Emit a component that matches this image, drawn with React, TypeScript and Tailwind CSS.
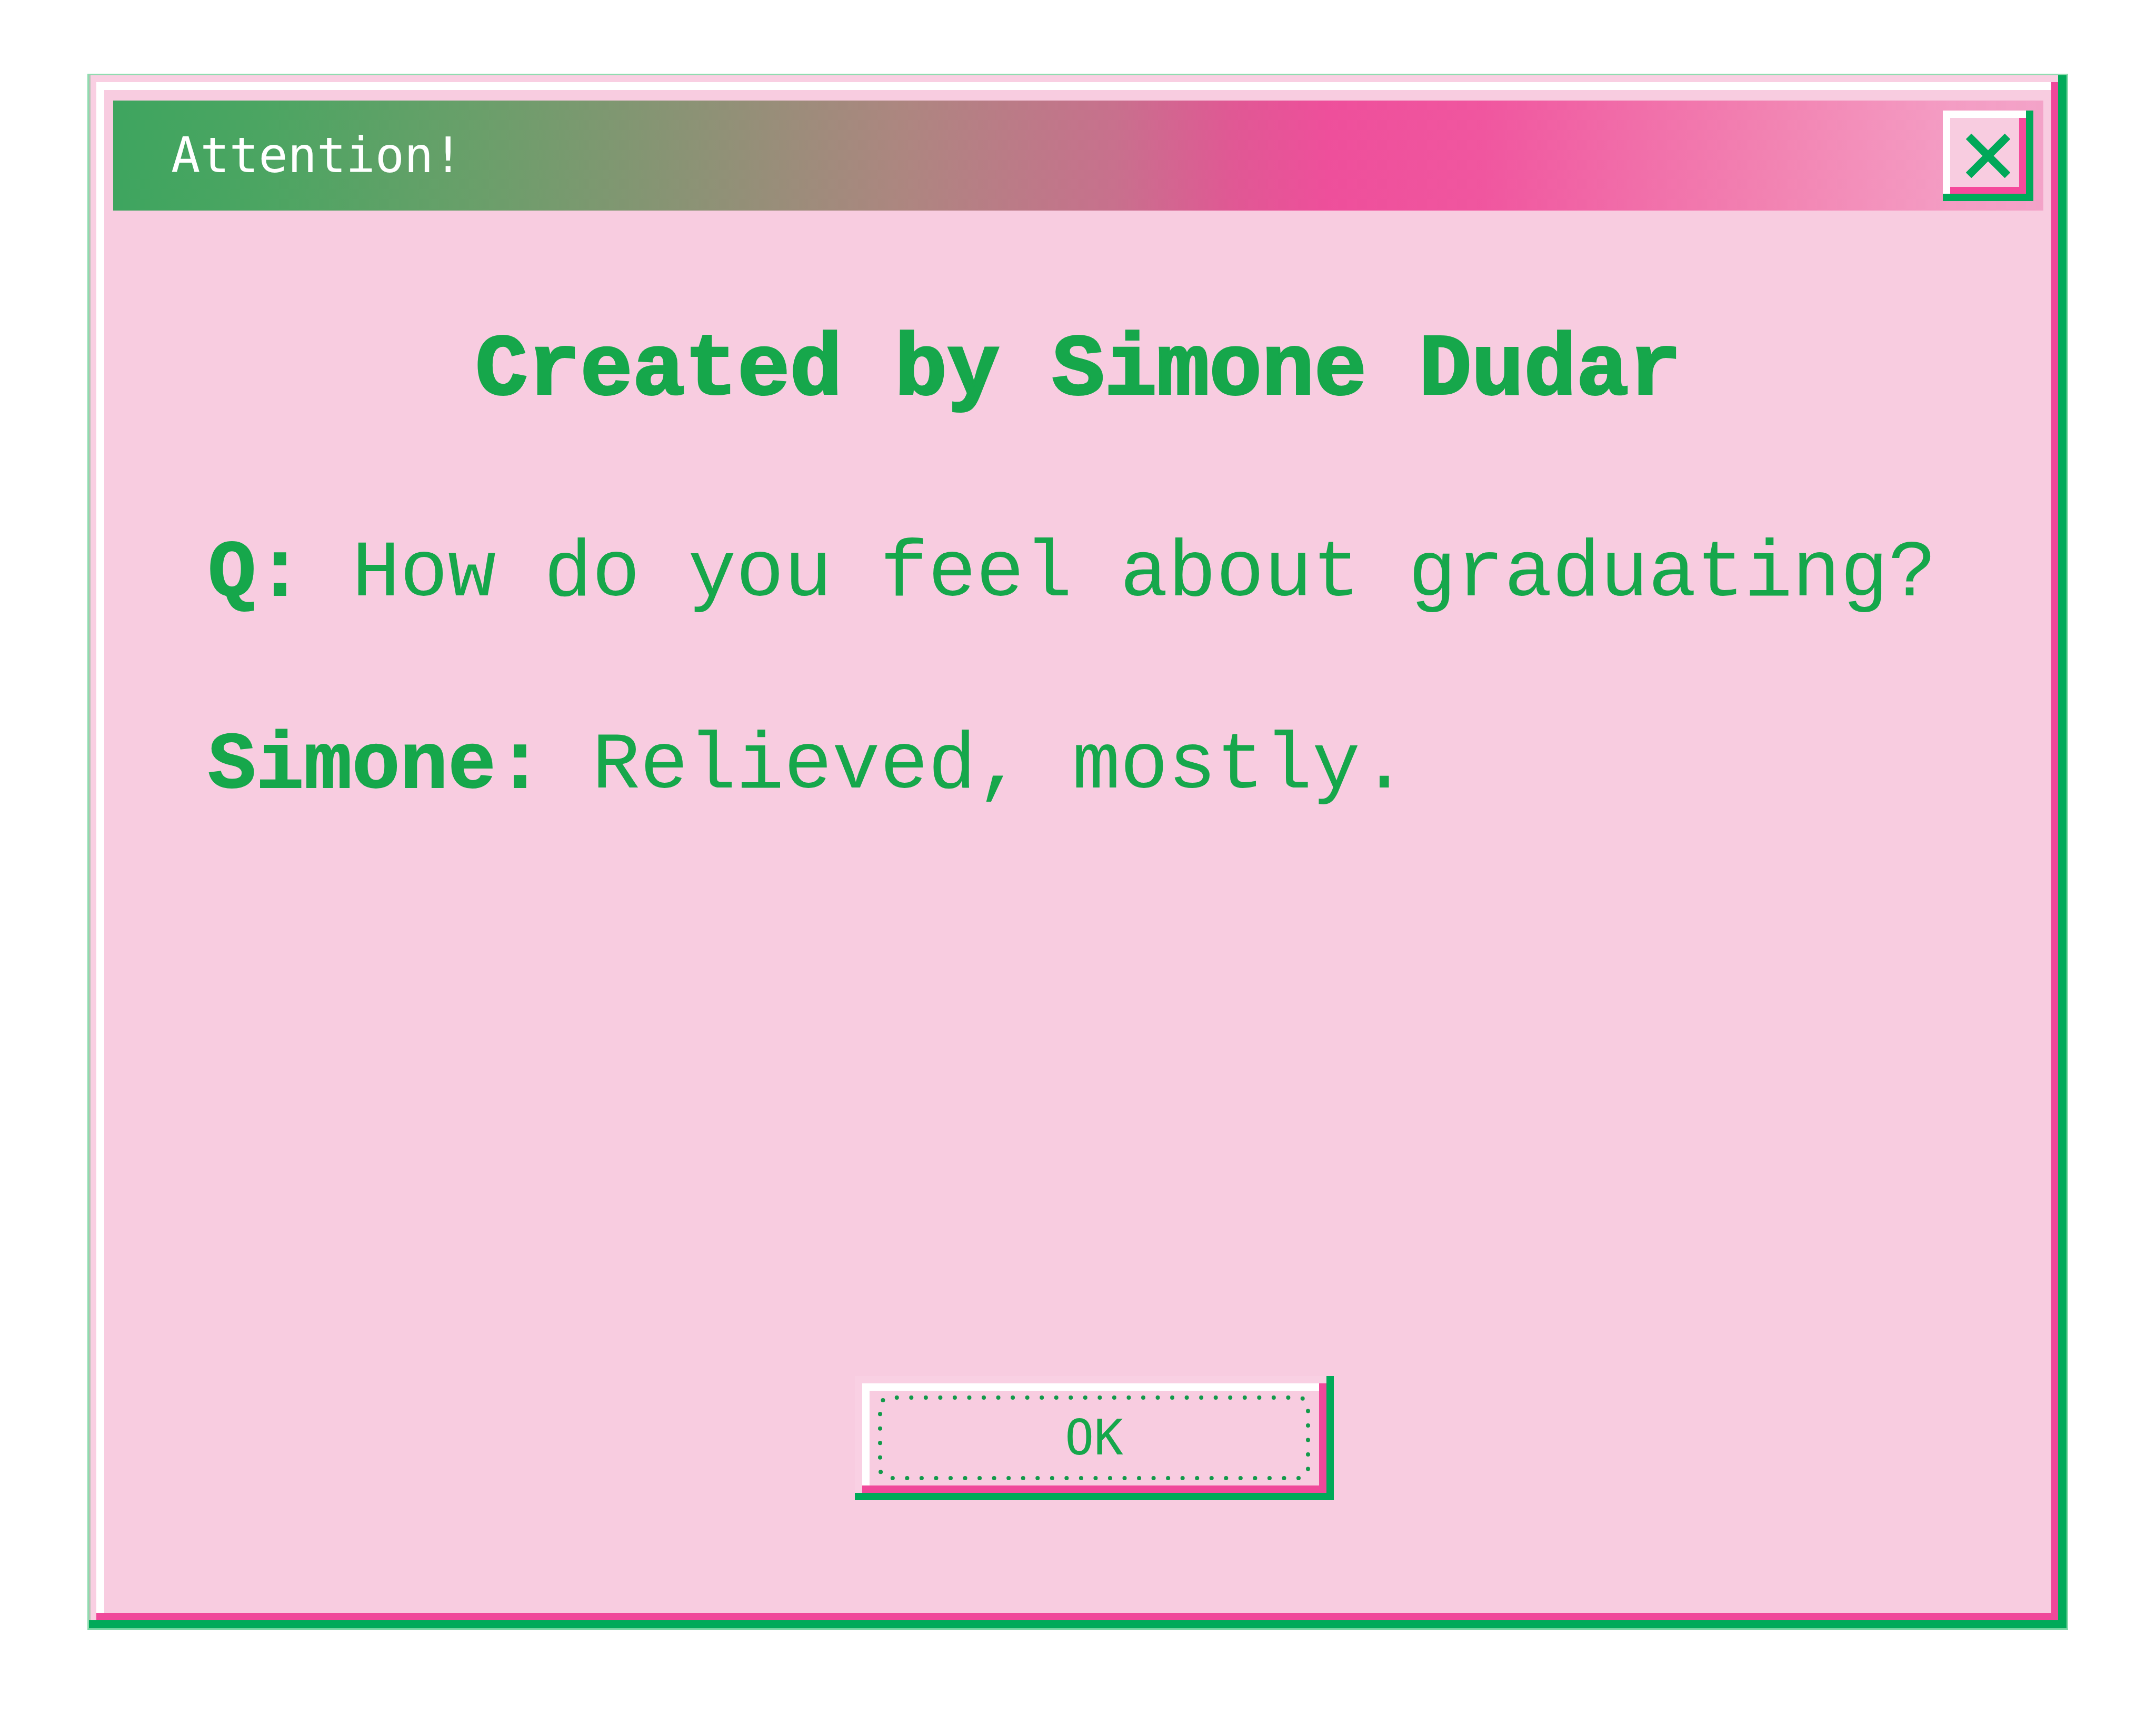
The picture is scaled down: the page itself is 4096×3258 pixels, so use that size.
function CloseIcon() {
  return (
    <svg viewBox="0 0 84 84" className="size-[84px]" fill="none" stroke="#00a859" strokeWidth="15" aria-hidden="true">
      <path d="M5 5 79 79M79 5 5 79" />
    </svg>
  );
}

function DottedOutline() {
  return (
    <svg viewBox="0 0 910 236" className="pointer-events-none absolute inset-0 size-full" fill="none" aria-hidden="true">
      <rect
        x="48"
        y="41"
        width="813"
        height="153"
        rx="18"
        stroke="#129a4a"
        strokeWidth="8"
        strokeLinecap="round"
        pathLength="69"
        strokeDasharray="0 1"
        strokeDashoffset="-0.5"
      />
    </svg>
  );
}

export default function App() {
  return (
    <main className="flex min-h-screen bg-white pt-[140px] pr-[167px] pb-[162px] pl-[166px] font-['Liberation_Mono',monospace] text-[#16a74b]">
      <section
        role="dialog"
        aria-labelledby="title"
        className="flex min-w-0 flex-1 flex-col border-[3px] border-t-[#90dcb0] border-r-[#88d8aa] border-b-[#72d49f] border-l-[#90dcb0] bg-[#f8cce0] pt-[48px] pr-[44px] pb-[243px] pl-[46px] shadow-[inset_-16px_-15px_0_#00aa59,inset_3px_0_0_#b3c4b4,inset_14px_13px_0_#f9cfe2,inset_-29px_-29px_0_#f0489a,inset_29px_28px_0_#ffffff]"
      >
        <header className="flex h-[209px] items-center justify-between bg-[linear-gradient(90deg,#3ea55f_0%,#4ca562_8%,#6a9f6a_19%,#ad8680_41%,#c8708d_52%,#e05894_58%,#ee4f9b_63%,#f0569f_71%,#f283b2_86%,#f49cc3_95%,#f3a3c8_100%)] pr-[19px] pl-[110px]">
          <h1 id="title" className="font-['DejaVu_Sans_Mono',monospace] text-[92px] leading-[108px] text-white">
            Attention!
          </h1>
          <button
            type="button"
            aria-label="Close"
            className="flex size-[172px] items-center justify-center bg-[#f8cce0] shadow-[inset_-14px_-14px_0_#00aa59,inset_14px_14px_0_#ffffff,inset_-27px_-27px_0_#f5499b]"
          >
            <CloseIcon />
          </button>
        </header>

        <h2 className="mt-[210px] text-center text-[166px] leading-[188px] font-bold [-webkit-text-stroke:4px_#16a74b]">
          Created by Simone Dudar
        </h2>
        <div className="mt-[207px] flex flex-col gap-[193px] pl-[180px] text-[152px] leading-[172px]">
          <p>
            <b className="[-webkit-text-stroke:2px_#16a74b]">Q:</b> How do you feel about graduating?
          </p>
          <p>
            <b className="[-webkit-text-stroke:2px_#16a74b]">Simone:</b> Relieved, mostly.
          </p>
        </div>

        <footer className="mt-auto flex justify-center pl-[60px]">
          <button
            type="button"
            className="relative flex h-[236px] w-[910px] items-center justify-center bg-[#f8cce0] font-['DejaVu_Sans_Mono',monospace] text-[92px] leading-[108px] shadow-[inset_-14px_-14px_0_#00aa59,inset_14px_14px_0_#f9d0e3,inset_-28px_-28px_0_#f0489a,inset_28px_28px_0_#ffffff]"
          >
            <DottedOutline />
            OK
          </button>
        </footer>
      </section>
    </main>
  );
}
